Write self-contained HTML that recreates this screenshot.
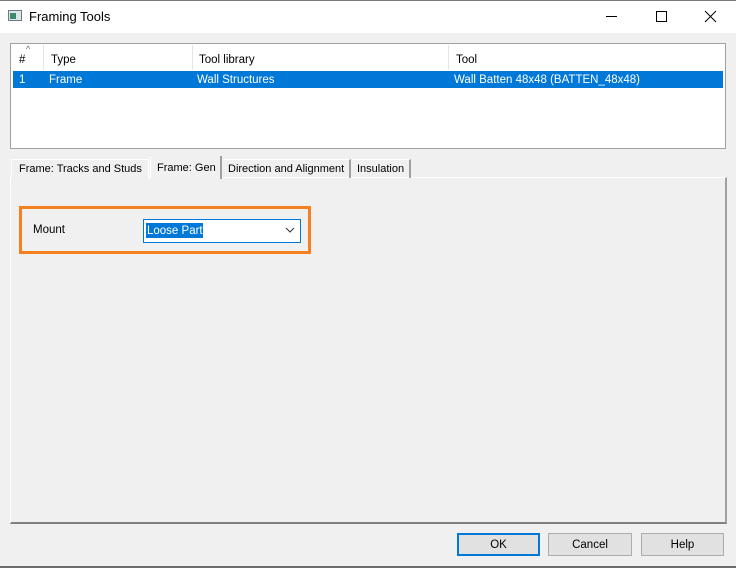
<!DOCTYPE html><html><head><style>
*{box-sizing:border-box;margin:0;padding:0}
body{width:736px;height:568px;background:#f0f0f0;font-family:"Liberation Sans",sans-serif;font-size:11.5px;color:#000;position:relative;overflow:hidden}
.a{position:absolute;white-space:nowrap}
</style></head><body>
<div class="a" style="left:0;top:0;width:736px;height:1px;background:#7a7a7a"></div>
<div class="a" style="left:0;top:1px;width:736px;height:32px;background:#fff"></div>
<div class="a" style="left:8px;top:10px;width:14px;height:11px;border:1px solid #6b7a88;background:#dfe6ea"><div style="position:absolute;left:1px;top:2px;width:6px;height:6px;background:#3d8a6a"></div></div>
<div class="a" style="left:29px;top:9px;font-size:13px">Framing Tools</div>
<div class="a" style="left:606px;top:16px;width:11px;height:1px;background:#000"></div>
<div class="a" style="left:656px;top:11px;width:11px;height:11px;border:1px solid #000"></div>
<svg class="a" style="left:704px;top:10px" width="13" height="13"><path d="M1 1L12 12M12 1L1 12" stroke="#000" stroke-width="1"/></svg>

<div class="a" style="left:10px;top:43px;width:716px;height:106px;border:1px solid #a0a0a0;background:#fff"></div>
<div class="a" style="left:43px;top:45px;width:1px;height:25px;background:#e5e5e5"></div>
<div class="a" style="left:192px;top:45px;width:1px;height:25px;background:#e5e5e5"></div>
<div class="a" style="left:448px;top:45px;width:1px;height:25px;background:#e5e5e5"></div>
<div class="a" style="left:26px;top:44px;font-size:9px;color:#666">^</div>
<div class="a" style="left:19px;top:54px">#</div>
<div class="a" style="left:51px;top:54px">Type</div>
<div class="a" style="left:199px;top:54px">Tool library</div>
<div class="a" style="left:456px;top:54px">Tool</div>
<div class="a" style="left:13px;top:71px;width:710px;height:17px;background:#0078d7;color:#fff">
<span class="a" style="left:6px;top:3px">1</span><span class="a" style="left:36px;top:3px">Frame</span><span class="a" style="left:184px;top:3px">Wall Structures</span><span class="a" style="left:441px;top:3px">Wall Batten 48x48 (BATTEN_48x48)</span></div>

<div class="a" style="left:10px;top:177px;width:717px;height:347px;border:1px solid #fff;border-right:2px solid #a0a0a0;border-bottom:2px solid #808080;background:#f0f0f0"></div>
<div class="a" style="left:11px;top:159px;width:138px;height:19px;border:1px solid #fff;border-bottom:none;background:#f0f0f0;padding:3px 0 0 7px;font-size:11px">Frame: Tracks and Studs</div>
<div class="a" style="left:150px;top:156px;width:72px;height:23px;border-left:1px solid #fff;border-right:2px solid #a0a0a0;background:#f0f0f0;padding:6px 0 0 6px;font-size:11px">Frame: Gen</div>
<div class="a" style="left:223px;top:159px;width:128px;height:19px;border-right:2px solid #a0a0a0;border-top:1px solid #fff;padding:3px 0 0 5px;font-size:11px">Direction and Alignment</div>
<div class="a" style="left:352px;top:159px;width:59px;height:19px;border-right:2px solid #a0a0a0;border-top:1px solid #fff;padding:3px 0 0 5px;font-size:11px">Insulation</div>

<div class="a" style="left:19px;top:206px;width:292px;height:48px;border:3px solid #f58020"></div>
<div class="a" style="left:33px;top:224px">Mount</div>
<div class="a" style="left:143px;top:219px;width:158px;height:24px;border:1px solid #0078d7;background:#fff"></div>
<div class="a" style="left:146px;top:223px;width:57px;height:15px;background:#0078d7;color:#fff;padding:2px 0 0 1px">Loose Part</div>
<svg class="a" style="left:285px;top:227px" width="10" height="7"><path d="M1 1L5 5L9 1" stroke="#333" fill="none"/></svg>

<div class="a" style="left:457px;top:533px;width:83px;height:23px;border:2px solid #0078d7;background:#e1e1e1;text-align:center;padding-top:4px">OK</div>
<div class="a" style="left:548px;top:533px;width:84px;height:23px;border:1px solid #adadad;background:#e1e1e1;text-align:center;padding-top:5px">Cancel</div>
<div class="a" style="left:641px;top:533px;width:83px;height:23px;border:1px solid #adadad;background:#e1e1e1;text-align:center;padding-top:5px">Help</div>
<div class="a" style="left:0;top:566px;width:736px;height:2px;background:#6d6d6d"></div>
</body></html>
